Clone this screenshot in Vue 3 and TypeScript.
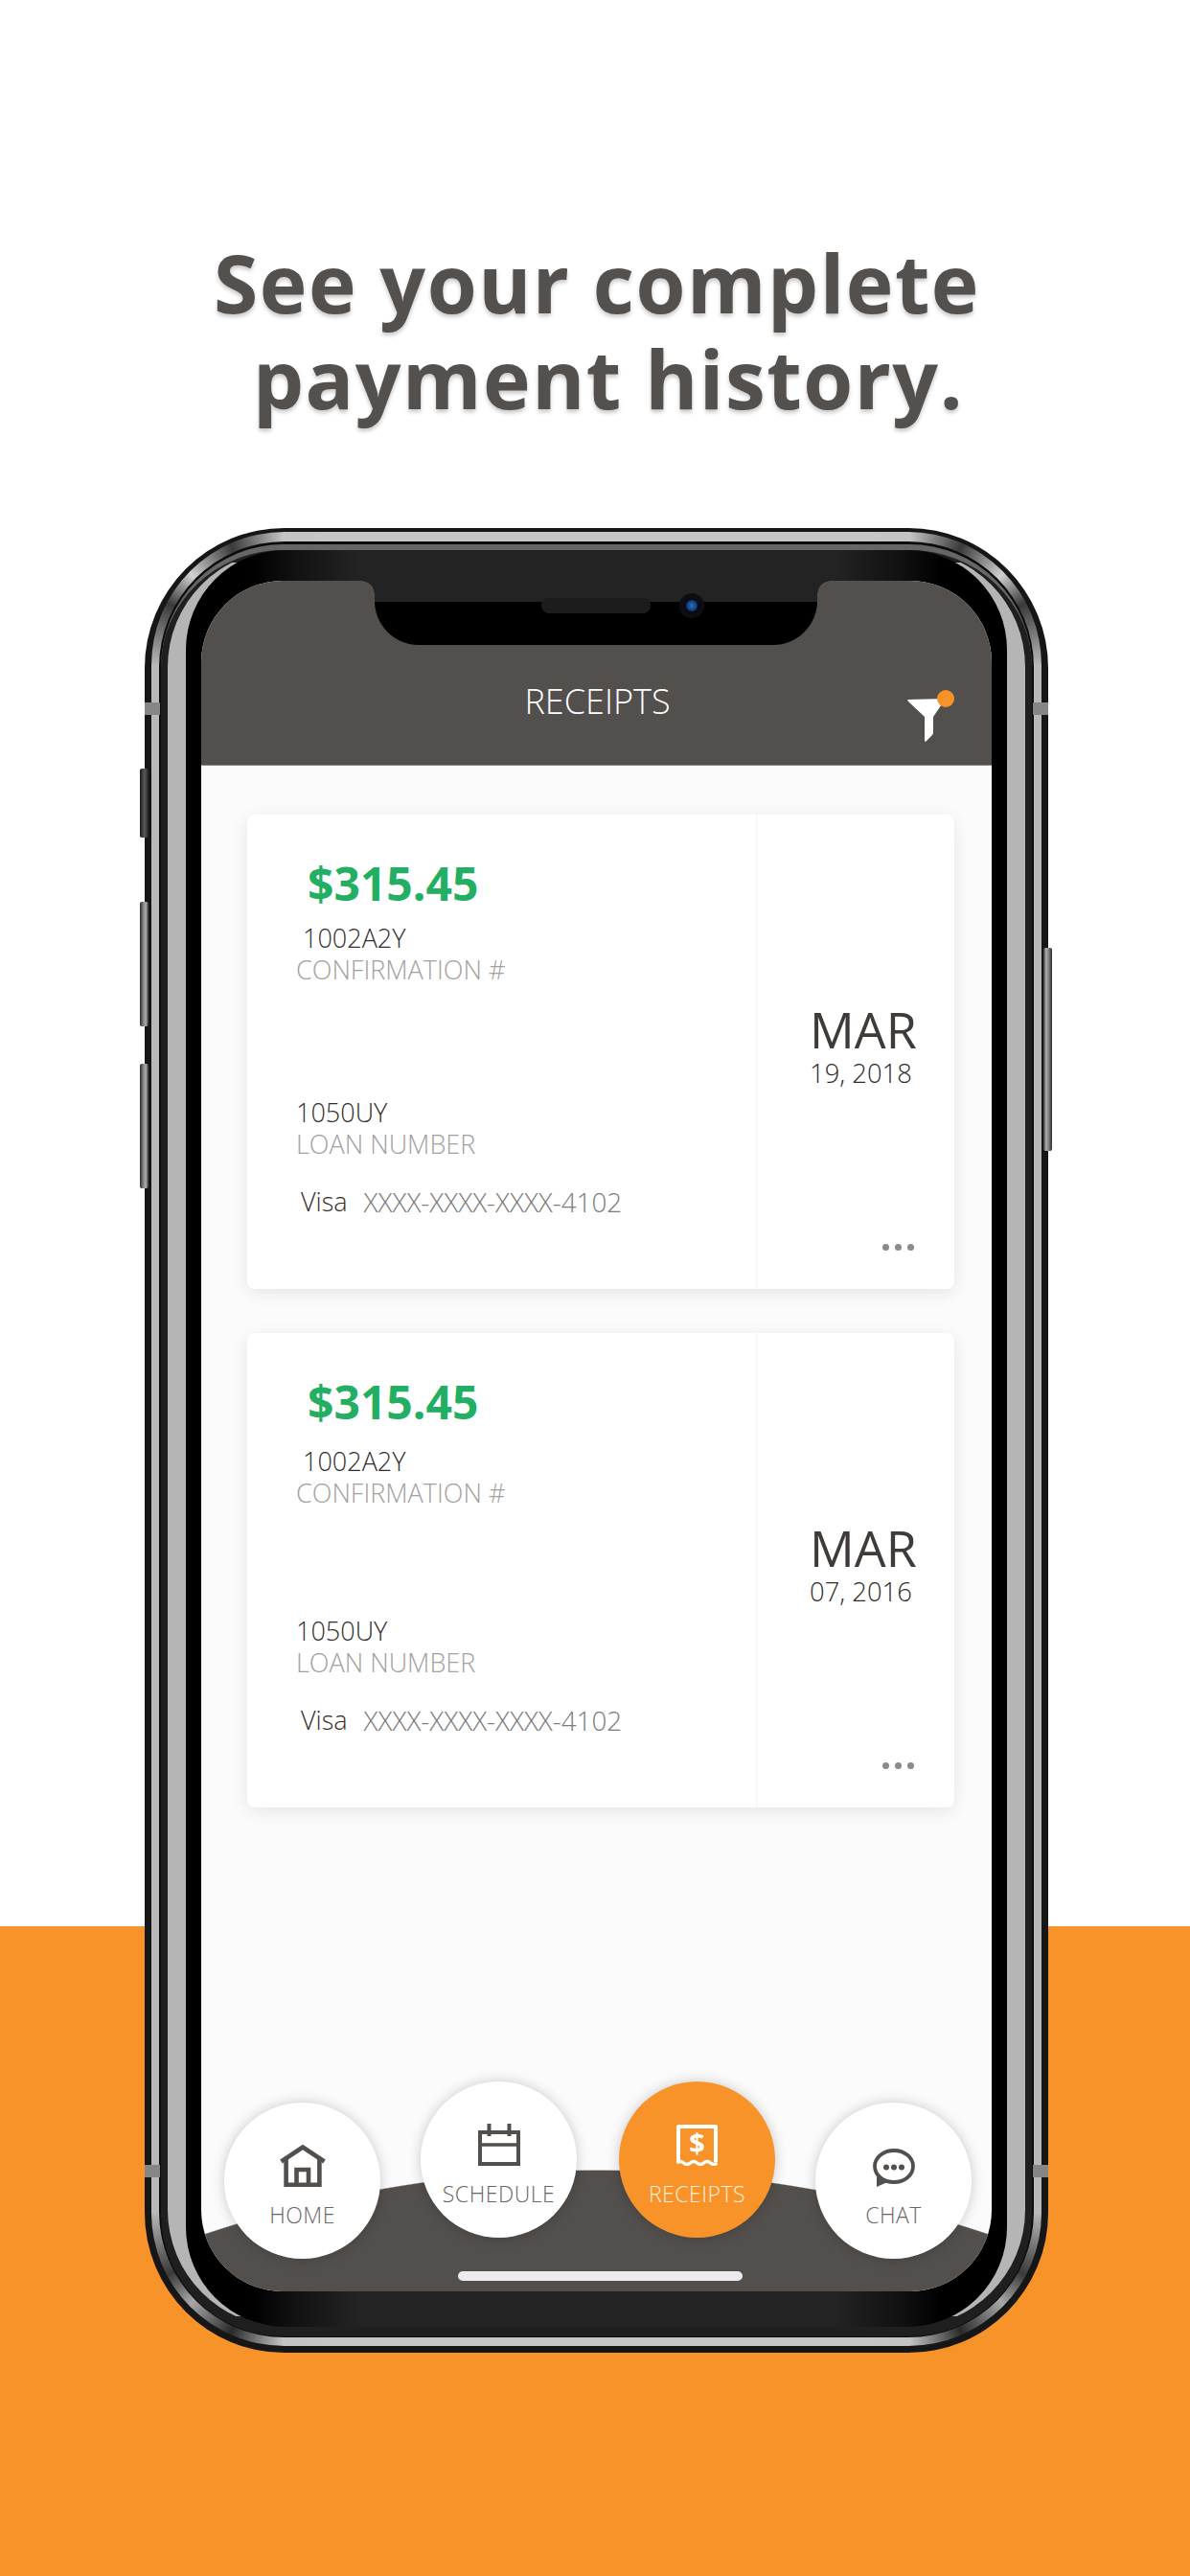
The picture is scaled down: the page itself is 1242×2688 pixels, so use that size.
<script setup lang="ts">
interface Receipt {
  amount: string
  confirmation: string
  loan: string
  brand: string
  masked: string
  month: string
  date: string
  late: boolean
}

const receipts: Receipt[] = [
  { amount: '$315.45', confirmation: '1002A2Y', loan: '1050UY', brand: 'Visa', masked: 'XXXX-XXXX-XXXX-4102', month: 'MAR', date: '19, 2018', late: false },
  { amount: '$315.45', confirmation: '1002A2Y', loan: '1050UY', brand: 'Visa', masked: 'XXXX-XXXX-XXXX-4102', month: 'MAR', date: '07, 2016', late: true },
]
</script>

<template>
  <div class="page">
    <h1 class="headline">
      <span class="line">See your complete</span>
      <span class="line line-two">payment history.</span>
    </h1>

    <div class="phone">
      <i class="side mute"></i>
      <i class="side vol-up"></i>
      <i class="side vol-down"></i>
      <i class="side power"></i>
      <i class="antenna a-tl"></i>
      <i class="antenna a-tr"></i>
      <i class="antenna a-bl"></i>
      <i class="antenna a-br"></i>

      <div class="band">
        <div class="ring">
          <div class="body">
            <div class="bezel">
              <div class="screen">
                <header class="bar">
                  <div class="notch">
                    <span class="speaker"></span>
                    <span class="camera"></span>
                  </div>
                  <div class="bar-title">RECEIPTS</div>
                  <svg class="filter" width="50" height="54" viewBox="0 0 50 54">
                    <path d="M0 10 L40 9 L27 28 V44 Q27 46 26 47 L19 54 Q18 54 18 52 V28 L1 12 Z" fill="#fff" />
                    <circle cx="40" cy="9" r="9" fill="#f89329" />
                  </svg>
                </header>

                <main class="list">
                  <article v-for="(r, i) in receipts" :key="i" class="card" :class="{ late: r.late }">
                    <div class="card-main">
                      <div class="amount">{{ r.amount }}</div>
                      <div class="value conf-value">{{ r.confirmation }}</div>
                      <div class="label conf-label">CONFIRMATION #</div>
                      <div class="value loan-value">{{ r.loan }}</div>
                      <div class="label loan-label">LOAN NUMBER</div>
                      <div class="pay">
                        <span class="brand">{{ r.brand }}</span>
                        <span class="masked">{{ r.masked }}</span>
                      </div>
                    </div>
                    <div class="card-side">
                      <div class="month">{{ r.month }}</div>
                      <div class="date">{{ r.date }}</div>
                    </div>
                    <div class="dots"><i></i><i></i><i></i></div>
                  </article>
                </main>

                <nav class="nav">
                  <div class="tab low">
                    <span class="icon">
                      <svg width="48" height="44" viewBox="0 0 48 44" fill="none" stroke="#534f4d" stroke-width="4.6">
                        <path d="M1.5 17.5 L24 2.5 L46.5 17.5" stroke-linejoin="miter" />
                        <path d="M6.6 13 V41.7 H41.4 V13" />
                        <path d="M17.5 41.7 V26 H30 V41.7" />
                      </svg>
                    </span>
                    <span class="tab-label">HOME</span>
                  </div>
                  <div class="tab">
                    <span class="icon">
                      <svg width="44" height="44" viewBox="0 0 44 44" fill="none" stroke="#534f4d" stroke-width="4">
                        <rect x="2" y="9" width="40" height="33" />
                        <path d="M2 22 H42" stroke-width="3.5" />
                        <path d="M11.5 0 V13 M32.5 0 V13" />
                      </svg>
                    </span>
                    <span class="tab-label">SCHEDULE</span>
                  </div>
                  <div class="tab active">
                    <span class="icon">
                      <svg width="43" height="43" viewBox="0 0 43 43" fill="none" stroke="#fff" stroke-width="4">
                        <path d="M2 39 V2 H41 V39" stroke-linejoin="round" />
                        <path d="M0.5 40 Q4 37 7.5 40 T14.5 40 T21.5 40 T28.5 40 T35.5 40 T42.5 40" stroke-width="3.4" />
                        <text x="21.5" y="30" text-anchor="middle" class="dollar">$</text>
                      </svg>
                    </span>
                    <span class="tab-label">RECEIPTS</span>
                  </div>
                  <div class="tab low">
                    <span class="icon">
                      <svg width="44" height="40" viewBox="0 0 44 40" fill="none" stroke="#534f4d">
                        <ellipse cx="22" cy="18.5" rx="20" ry="16.5" stroke-width="3.8" />
                        <path d="M4 29 V40 L15 35 Z" fill="#534f4d" stroke="none" />
                        <g fill="#534f4d" stroke="none">
                          <circle cx="14" cy="19.5" r="3" />
                          <circle cx="22" cy="19.5" r="3" />
                          <circle cx="30" cy="19.5" r="3" />
                        </g>
                      </svg>
                    </span>
                    <span class="tab-label">CHAT</span>
                  </div>
                  <span class="home-indicator"></span>
                </nav>
              </div>
            </div>
          </div>
        </div>
      </div>
    </div>
  </div>
</template>

<style scoped>
.page {
  width: 1242px;
  height: 2688px;
  overflow: hidden;
  background: linear-gradient(#fff 2010px, #f89329 2010px);
  font-family: "Open Sans", "Liberation Sans", sans-serif;
}

.headline {
  margin: 0;
  padding-top: 245px;
  text-align: center;
  font-size: 84px;
  line-height: 100px;
  font-weight: 700;
  letter-spacing: 1.5px;
  color: #54504e;
  text-shadow: 0 3px 4px rgba(0, 0, 0, 0.22);
}
.line { display: block; padding-left: 4px; }
.line-two { padding-left: 28px; }

/* Device shell */
.phone {
  position: relative;
  box-sizing: border-box;
  width: 943px;
  height: 1904px;
  margin: 106px 0 0 151px;
  padding: 4px 7px 7px;
  border-radius: 146px;
  background: #161616;
}
.side {
  position: absolute;
  width: 9px;
  border-radius: 2px;
}
.mute, .vol-up, .vol-down {
  left: -5px;
  background: linear-gradient(90deg, #2a2a2a, #8f8f8f 45%, #aaa 70%, #333);
}
.mute { top: 251px; height: 72px; background: linear-gradient(90deg, #1c1c1c, #5a5a5a 55%, #222); }
.vol-up { top: 390px; height: 130px; }
.vol-down { top: 559px; height: 130px; }
.power {
  left: 938px;
  top: 438px;
  height: 212px;
  background: linear-gradient(270deg, #2a2a2a, #8f8f8f 45%, #aaa 70%, #333);
}
.antenna {
  position: absolute;
  width: 16px;
  height: 13px;
  background: #868686;
  z-index: 2;
}
.a-tl { left: 0; top: 182px; }
.a-tr { right: 0; top: 182px; }
.a-bl { left: 0; top: 1708px; }
.a-br { right: 0; top: 1708px; }

.band {
  position: relative;
  box-sizing: border-box;
  height: 100%;
  padding: 10px 8px 9px;
  border-radius: 139px;
  background:
    conic-gradient(from 270deg at 100% 100%, #b8b8b8 0deg, #3a3a3a 28deg, #d0d0d0 44deg, #3a3a3a 66deg, #c8c8c8 90deg) 0 0 / 139px 139px no-repeat,
    conic-gradient(from 0deg at 0 100%, #c8c8c8 0deg, #3a3a3a 24deg, #d0d0d0 46deg, #3a3a3a 62deg, #b8b8b8 90deg) 100% 0 / 139px 139px no-repeat,
    conic-gradient(from 90deg at 0 0, #b8b8b8 0deg, #3a3a3a 28deg, #a8a8a8 44deg, #2a2a2a 66deg, #c8c8c8 90deg) 100% 100% / 139px 139px no-repeat,
    conic-gradient(from 180deg at 100% 0, #c8c8c8 0deg, #2a2a2a 24deg, #a8a8a8 46deg, #3a3a3a 62deg, #b8b8b8 90deg) 0 100% / 139px 139px no-repeat,
    linear-gradient(90deg, #b8b8b8, #c6c6c6 20%, #c6c6c6 80%, #b8b8b8);
}
.ring {
  box-sizing: border-box;
  height: 100%;
  padding: 3px 2px 1px;
  border-radius: 131px;
  background: #0c0c0c;
}
.body {
  position: relative;
  box-sizing: border-box;
  height: 100%;
  padding: 0 26px 10px;
  border-top: 6px solid #666;
  border-radius: 128px;
  background: #1f1f1f;
}
.body::before {
  content: "";
  position: absolute;
  left: 7px;
  right: 7px;
  top: 0;
  bottom: 10px;
  border-radius: 122px;
  background: #b5b5b5;
  clip-path: inset(13px 0 11px 0);
}
.bezel {
  position: relative;
  box-sizing: border-box;
  height: 100%;
  padding: 32px 16px 37px;
  border-radius: 104px;
  background: linear-gradient(90deg, #000 0, #000 8%, #111 13%, #232323 21%, #232323 79%, #111 87%, #000 92%, #000 100%);
}
.screen {
  position: relative;
  display: flex;
  flex-direction: column;
  height: 100%;
  overflow: hidden;
  border-radius: 85px;
  background: #fbfbfb;
}

/* App bar */
.bar {
  position: relative;
  flex: none;
  box-sizing: border-box;
  height: 193px;
  padding-top: 104px;
  background: #534f4d;
  border-bottom: 1px solid #8a8786;
  text-align: center;
}
.bar-title {
  font-size: 36px;
  line-height: 44px;
  font-weight: 300;
  color: #fff;
  padding-left: 2px;
}
.notch {
  position: absolute;
  left: 181px;
  top: 0;
  width: 462px;
  height: 67px;
  border-radius: 0 0 46px 46px;
  background: linear-gradient(#232323 22px, #000 22px);
}
.notch::before, .notch::after {
  content: "";
  position: absolute;
  top: 0;
  width: 14px;
  height: 14px;
}
.notch::before {
  left: -14px;
  background: radial-gradient(circle at 0 100%, transparent 13.5px, #232323 14px);
}
.notch::after {
  right: -14px;
  background: radial-gradient(circle at 100% 100%, transparent 13.5px, #232323 14px);
}
.speaker {
  position: absolute;
  left: 174px;
  top: 18px;
  width: 114px;
  height: 16px;
  border-radius: 8px;
  background: #1c1c1c;
}
.camera {
  position: absolute;
  left: 318px;
  top: 13px;
  width: 26px;
  height: 26px;
  border-radius: 50%;
  background: radial-gradient(circle, #2b6fc4 0, #123a78 28%, #0a0a14 36%, #111 100%);
}
.filter {
  position: absolute;
  left: 737px;
  top: 114px;
}

/* Cards */
.list {
  flex: 1;
  min-height: 0;
  box-sizing: border-box;
  padding: 51px 39px 0 48px;
  display: flex;
  flex-direction: column;
  gap: 46px;
}
.card {
  position: relative;
  flex: none;
  display: flex;
  width: 738px;
  height: 495px;
  border-radius: 8px;
  background: #fff;
  box-shadow: 0 4px 18px rgba(0, 0, 0, 0.09);
}
.card-main {
  flex: none;
  box-sizing: border-box;
  width: 531px;
  padding: 42px 0 0 51px;
}
.card-side {
  flex: 1;
  box-sizing: border-box;
  padding: 194px 0 0 55px;
  border-left: 1px solid #f4f4f4;
}
.amount {
  margin-left: 12px;
  font-size: 48px;
  line-height: 60px;
  font-weight: 700;
  color: #22af63;
}
.value, .label, .pay, .date {
  font-size: 27px;
  line-height: 32px;
  font-weight: 300;
}
.value { color: #332f2d; }
.label { color: #a3a09e; }
.conf-value { margin: 11px 0 0 7px; }
.conf-label { margin-top: 1px; }
.late .conf-value { margin-top: 16px; }
.loan-value { margin-top: 117px; }
.late .loan-value { margin-top: 112px; }
.loan-label { margin-top: 1px; }
.pay { margin: 28px 0 0 5px; display: flex; gap: 17px; }
.brand { color: #332f2d; }
.masked { color: #7f7b79; font-size: 27.8px; }
.month {
  font-size: 52px;
  line-height: 60px;
  color: #3f3b39;
}
.date { color: #2f2b29; font-size: 27.4px; }
.dots {
  position: absolute;
  right: 42px;
  bottom: 40px;
  display: flex;
  gap: 6px;
}
.dots i {
  width: 7px;
  height: 7px;
  border-radius: 50%;
  background: #8a8a8a;
}

/* Bottom nav */
.nav {
  position: absolute;
  left: 0;
  right: 0;
  bottom: 0;
  box-sizing: border-box;
  height: 219px;
  padding-left: 24px;
  display: flex;
  align-items: flex-start;
  gap: 42px;
  background: radial-gradient(circle 1288px at 50% 1380px, #534f4d 99.9%, transparent 100%);
}
.tab {
  flex: none;
  box-sizing: border-box;
  width: 163px;
  height: 163px;
  padding-top: 44px;
  display: flex;
  flex-direction: column;
  align-items: center;
  border-radius: 50%;
  background: #fff;
  box-shadow: 0 0 14px rgba(0, 0, 0, 0.2);
}
.tab.low { margin-top: 22px; }
.tab.active { background: #f89329; margin-left: 2px; }
.icon {
  height: 44px;
  display: flex;
  align-items: flex-end;
}
.icon svg { display: block; }
.dollar {
  font-family: "Open Sans", sans-serif;
  font-size: 29px;
  font-weight: 700;
  fill: #fff;
  stroke: none;
}
.tab-label {
  margin-top: 15px;
  font-size: 23px;
  line-height: 28px;
  font-weight: 300;
  letter-spacing: 0.5px;
  color: #6a6664;
}
.active .tab-label { color: #fdeedd; }
.home-indicator {
  position: absolute;
  left: 268px;
  bottom: 11px;
  width: 297px;
  height: 10px;
  border-radius: 5px;
  background: #ecebee;
}
</style>
